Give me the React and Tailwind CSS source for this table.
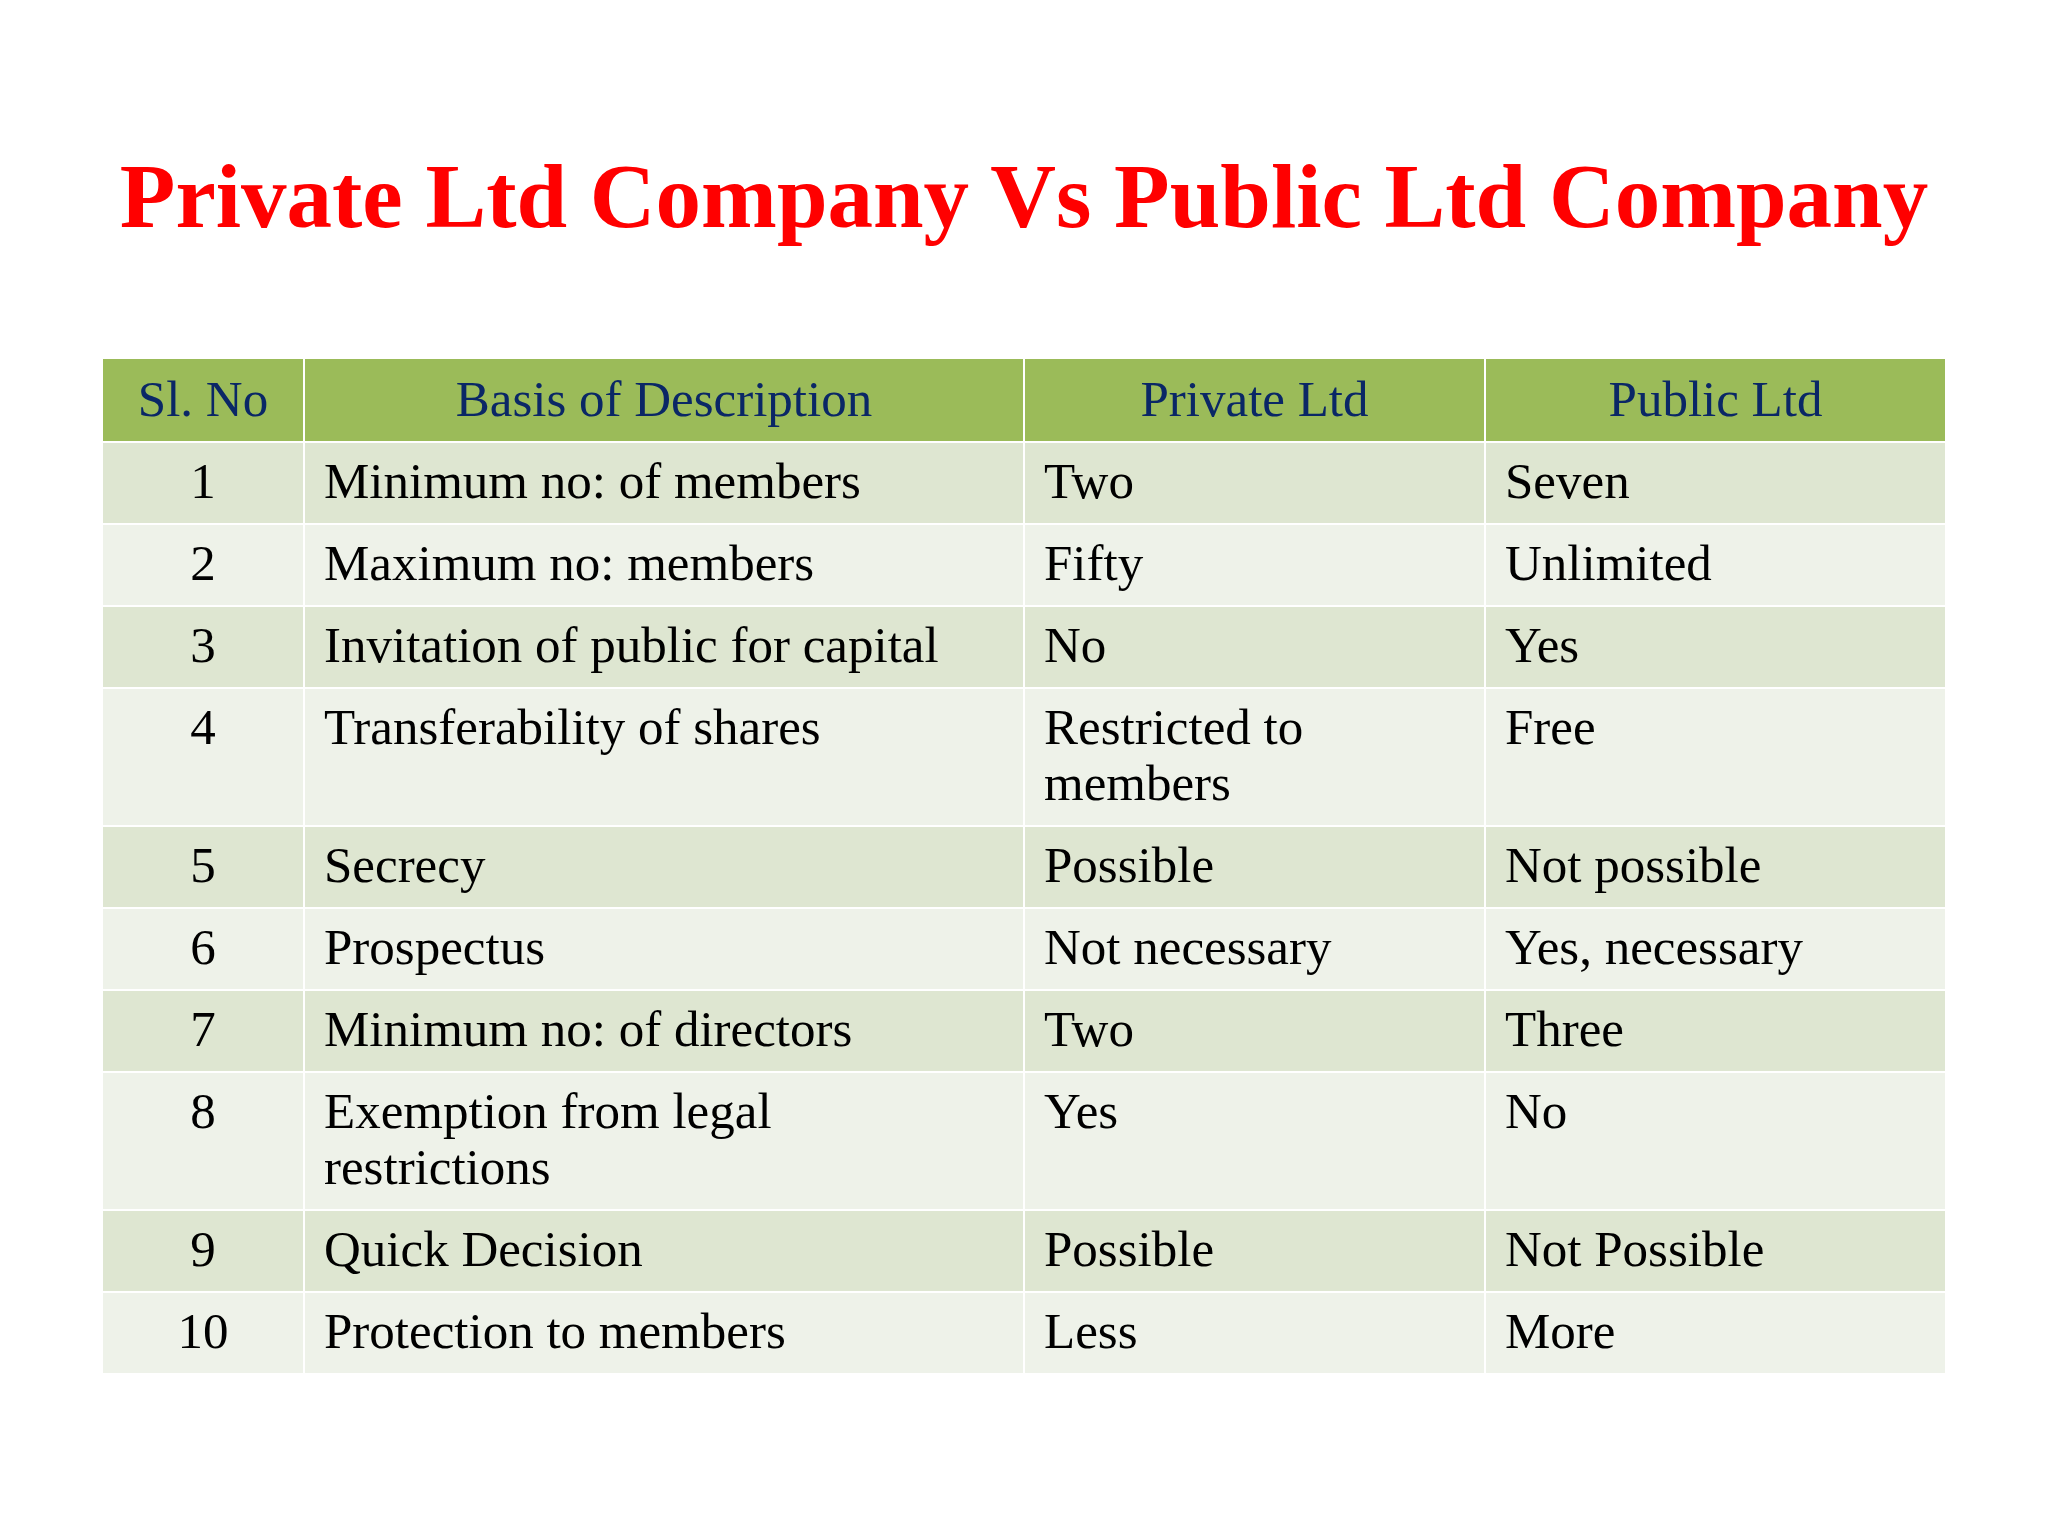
const rows = [
  ["1", "Minimum no: of members", "Two", "Seven"],
  ["2", "Maximum no: members", "Fifty", "Unlimited"],
  ["3", "Invitation of public for capital", "No", "Yes"],
  ["4", "Transferability of shares", "Restricted to members", "Free"],
  ["5", "Secrecy", "Possible", "Not possible"],
  ["6", "Prospectus", "Not necessary", "Yes, necessary"],
  ["7", "Minimum no: of directors", "Two", "Three"],
  ["8", "Exemption from legal restrictions", "Yes", "No"],
  ["9", "Quick Decision", "Possible", "Not Possible"],
  ["10", "Protection to members", "Less", "More"],
];

const headers = ["Sl. No", "Basis of Description", "Private Ltd", "Public Ltd"];

export default function App() {
  return (
    <div className="min-h-[1536px] bg-white pt-[151px] font-['Liberation_Serif','Times_New_Roman',serif]">
      <h1 className="text-center text-[91px] leading-[91px] font-bold text-[#ff0000]">
        Private Ltd Company Vs Public Ltd Company
      </h1>

      <div className="mx-auto mt-[117px] grid w-[1842px] grid-cols-[200px_718px_459px_459px] gap-[2px] bg-white text-[51px]">
        {headers.map((h) => (
          <div key={h} className="bg-[#9bbb59] pt-[12px] pb-[14px] text-center leading-[56px] text-[#0a2766]">
            {h}
          </div>
        ))}

        {rows.map((r, i) => {
          const bg = i % 2 === 0 ? "bg-[#dee6d1]" : "bg-[#eef2e9]";
          return r.map((cell, j) => (
            <div
              key={`${i}-${j}`}
              className={`${bg} pt-[10px] pb-[14px] leading-[56px] text-black ${j === 0 ? "text-center" : "pl-[19px] pr-[20px]"}`}
            >
              {cell}
            </div>
          ));
        })}
      </div>
    </div>
  );
}
